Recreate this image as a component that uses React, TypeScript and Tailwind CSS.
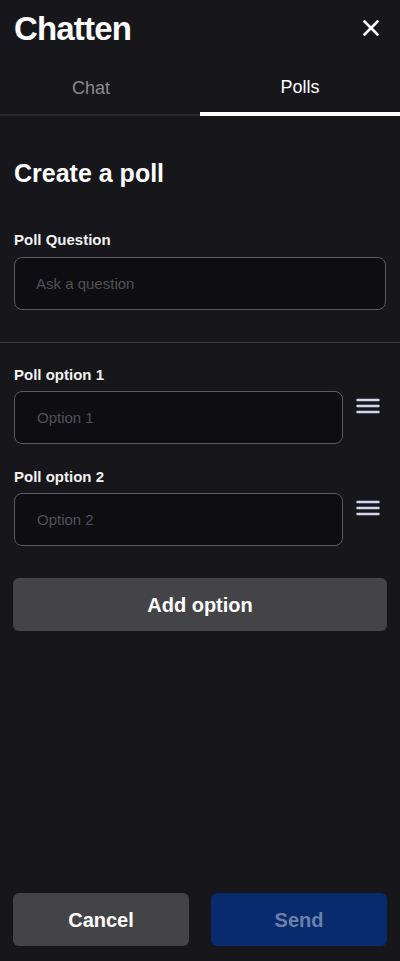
import { X } from 'lucide-react';

function MenuIcon() {
  return (
    <svg width="24" height="16" viewBox="0 0 24 16" className="text-[#d4d6ec]">
      <path d="M1.5 2h21M1.5 8h21M1.5 14h21" stroke="currentColor" strokeWidth="2.4" strokeLinecap="round" />
    </svg>
  );
}

function OptionField({ index }: { index: number }) {
  return (
    <div>
      <label className="block text-[15px] leading-5 font-bold text-[#f2f2f2]">Poll option {index}</label>
      <div className="mt-[6px] flex items-center">
        <input
          type="text"
          placeholder={`Option ${index}`}
          className="h-[53px] w-[329px] rounded-lg border border-[#5a5a5f] bg-[#0e0d11] pl-[22px] text-[15px] text-white placeholder:text-[#525256] outline-none"
        />
        <button className="ml-[13px] -mt-[24px] flex h-6 w-6 items-center justify-center">
          <MenuIcon />
        </button>
      </div>
    </div>
  );
}

export default function App() {
  return (
    <div
      className="flex h-[961px] flex-col bg-[#17161b] text-white"
      style={{ fontFamily: '"Liberation Sans", Arial, sans-serif' }}
    >
      <header className="flex h-[56px] items-center justify-between px-[14px]">
        <h1 className="text-[33px] font-bold leading-none tracking-tight text-white">Chatten</h1>
        <button className="mr-[2px] text-white">
          <X size={26} strokeWidth={2.4} />
        </button>
      </header>

      <div className="flex h-[60px] border-b-2 border-[#2a292e]">
        <button className="w-1/2 pr-[18px] pt-[6px] text-[18px] text-[#8a8a8e]">Chat</button>
        <button className="relative -mb-[2px] w-1/2 border-b-4 border-white pt-[6px] text-[18px] text-white">
          Polls
        </button>
      </div>

      <div className="px-[14px] pt-[41px]">
        <h2 className="text-[25px] font-bold leading-8 text-white">Create a poll</h2>
        <label className="mt-[41px] block text-[15px] leading-5 font-bold text-[#f2f2f2]">Poll Question</label>
        <input
          type="text"
          autoFocus
          placeholder="Ask a question"
          className="mt-[7px] h-[53px] w-full rounded-lg border border-[#5a5a5f] bg-[#0e0d11] pl-[21px] text-[15px] text-white placeholder:text-[#525256] caret-white outline-none"
        />
      </div>

      <div className="mt-[32px] border-t border-[#3b3a3f]" />

      <div className="flex flex-col gap-[23px] px-[14px] pt-[22px]">
        <OptionField index={1} />
        <OptionField index={2} />
      </div>

      <div className="px-[13px] pt-[32px]">
        <button className="h-[53px] w-full rounded-md bg-[#444446] text-[20px] font-bold text-white">
          Add option
        </button>
      </div>

      <div className="mt-auto flex gap-[22px] px-[13px] pb-[15px]">
        <button className="h-[53px] flex-1 rounded-md bg-[#444446] text-[20px] font-bold text-white">
          Cancel
        </button>
        <button className="h-[53px] flex-1 rounded-md bg-[#082a6e] text-[20px] font-bold text-[#6d80a8]">
          Send
        </button>
      </div>
    </div>
  );
}
